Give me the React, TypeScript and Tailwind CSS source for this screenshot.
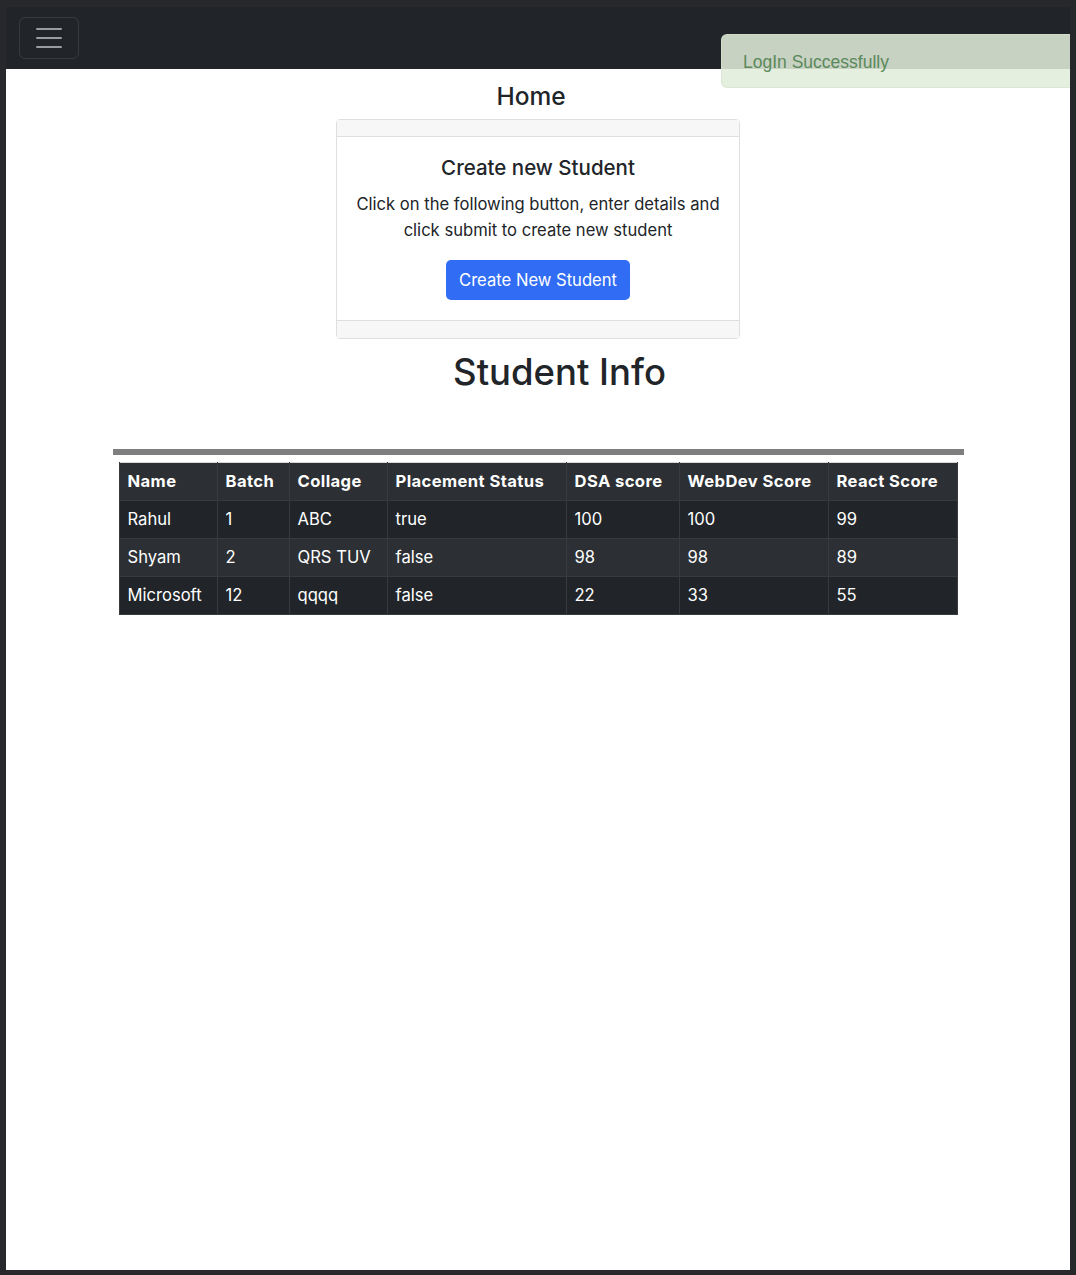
import React from 'react';

const students = [
  { name: 'Rahul', batch: '1', collage: 'ABC', placed: 'true', dsa: '100', web: '100', react: '99' },
  { name: 'Shyam', batch: '2', collage: 'QRS TUV', placed: 'false', dsa: '98', web: '98', react: '89' },
  { name: 'Microsoft', batch: '12', collage: 'qqqq', placed: 'false', dsa: '22', web: '33', react: '55' },
];

const columns = [
  { label: 'Name', w: 'w-[98px]' },
  { label: 'Batch', w: 'w-[72px]' },
  { label: 'Collage', w: 'w-[98px]' },
  { label: 'Placement Status', w: 'w-[179px]' },
  { label: 'DSA score', w: 'w-[113px]' },
  { label: 'WebDev Score', w: 'w-[149px]' },
  { label: 'React Score', w: 'w-[129px]' },
];

export default function App() {
  return (
    <div
      className="h-[1275px] bg-[#27282c] pt-[7px] px-[6px] pb-[5px] text-[#212529]"
      style={{ fontFamily: 'Inter, "Noto Sans", sans-serif' }}
    >
      <div className="relative h-full overflow-hidden bg-white">
        {/* Navbar */}
        <nav className="h-[62px] bg-[#212529] pl-[13px] pt-[10px]">
          <button className="flex h-[42px] w-[60px] flex-col items-center justify-center gap-[7px] rounded-md border border-white/10">
            <span className="block h-[2px] w-[26px] rounded bg-[#9a9c9f]" />
            <span className="block h-[2px] w-[26px] rounded bg-[#9a9c9f]" />
            <span className="block h-[2px] w-[26px] rounded bg-[#9a9c9f]" />
          </button>
        </nav>

        {/* Toast */}
        <div
          className="absolute left-[715px] top-[27px] h-[54px] w-[400px] rounded-md border border-[#d3e2cc]/60 bg-[rgba(224,237,218,0.87)] pl-[21px] pt-[14px] text-[17.5px] text-[#5b895b]"
          style={{ fontFamily: '"Liberation Sans", Arial, sans-serif' }}
        >
          LogIn Successfully
        </div>

        <h4 className="mt-[13px] pr-[14px] text-center text-[24.5px] leading-[29px] font-medium">Home</h4>

        {/* Card */}
        <div className="mx-auto mt-[8px] w-[404px] rounded border border-[#dfdfdf]">
          <div className="h-[17px] border-b border-[#dfdfdf] bg-[#f7f7f7]" />
          <div className="px-[16px] pt-[19px] pb-[20px] text-center">
            <h5 className="text-[20.5px] leading-[24px] font-medium">Create new Student</h5>
            <p className="mt-[11px] text-[16.6px] leading-[26px]">
              Click on the following button, enter details and click submit to create new student
            </p>
            <button className="mt-[17px] h-[40px] rounded-[5px] bg-[#316cf4] px-[13px] text-[16.6px] text-white">
              Create New Student
            </button>
          </div>
          <div className="h-[18px] border-t border-[#dfdfdf] bg-[#f7f7f7]" />
        </div>

        <h1 className="mt-[9px] pl-[43px] text-center text-[36.5px] leading-[48px] font-medium">Student Info</h1>

        <div className="mx-auto mt-[53px] h-[6px] w-[851px] bg-[#7f7f7f]" />

        <table className="mx-auto mt-[7px] w-[838px] table-fixed border border-[#d6d6d6] text-left text-[16.6px] text-white">
          <thead>
            <tr className="h-[38px] bg-[#2c3034]">
              {columns.map((c) => (
                <th
                  key={c.label}
                  className={`${c.w} border-x border-b border-[#373b3e] px-[8px] font-bold tracking-[0.4px]`}
                >
                  {c.label}
                </th>
              ))}
            </tr>
          </thead>
          <tbody>
            {students.map((s, i) => (
              <tr key={s.name} className={`h-[38px] ${i % 2 === 1 ? 'bg-[#2c3034]' : 'bg-[#212529]'}`}>
                {[s.name, s.batch, s.collage, s.placed, s.dsa, s.web, s.react].map((v, j) => (
                  <td key={j} className="border-x border-b border-[#373b3e] px-[8px]">
                    {v}
                  </td>
                ))}
              </tr>
            ))}
          </tbody>
        </table>
      </div>
    </div>
  );
}
